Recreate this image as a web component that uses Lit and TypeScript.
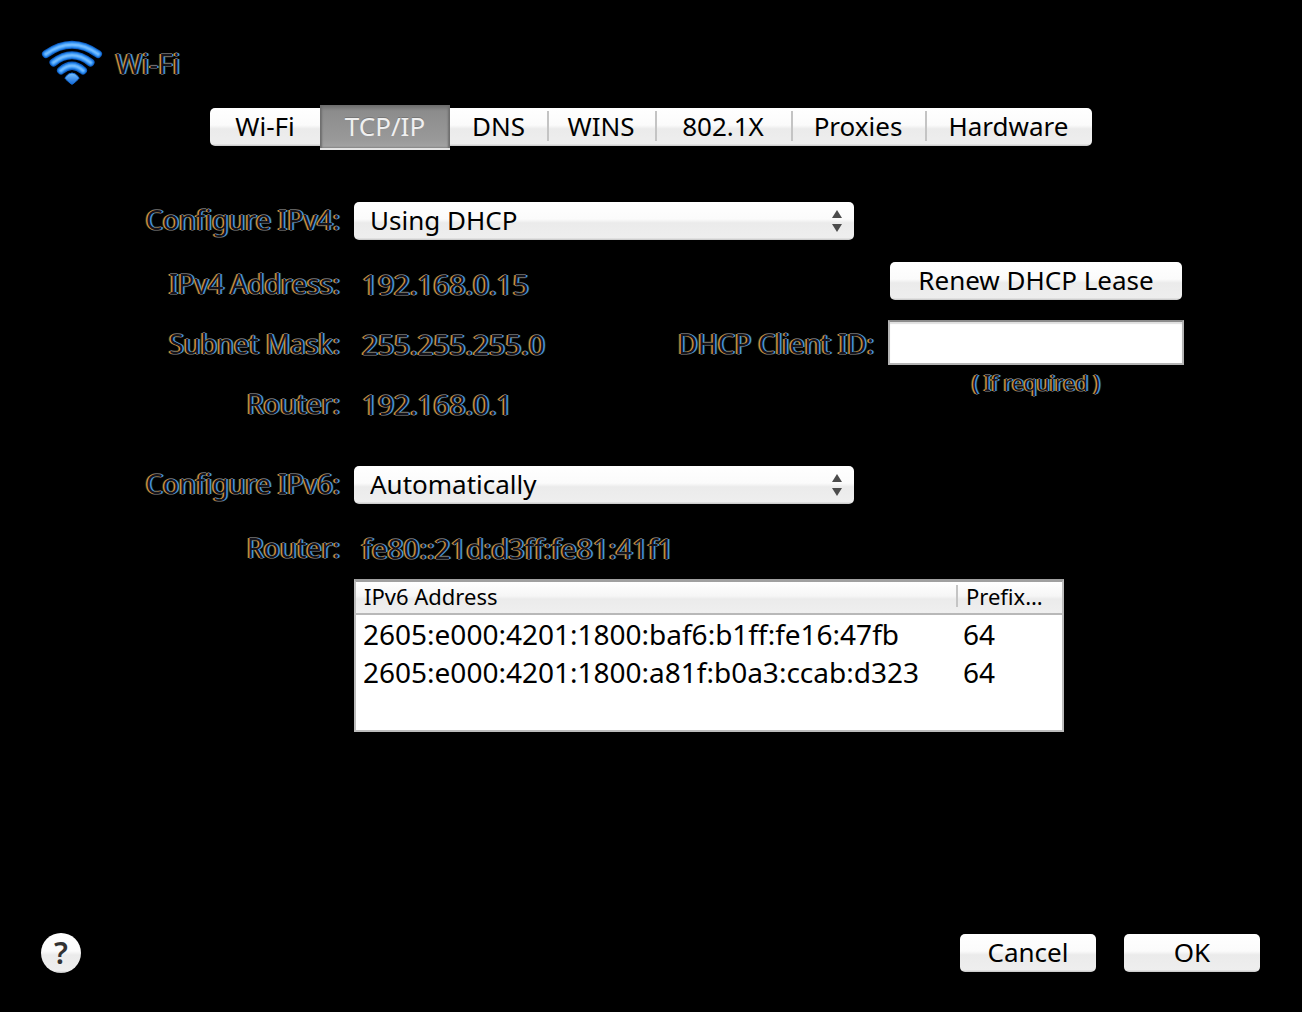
import { LitElement, html, css, svg } from "lit";
import { customElement, state } from "lit/decorators.js";
import { classMap } from "lit/directives/class-map.js";

const TABS = ["Wi-Fi", "TCP/IP", "DNS", "WINS", "802.1X", "Proxies", "Hardware"];

const ADDRESSES = [
  { address: "2605:e000:4201:1800:baf6:b1ff:fe16:47fb", prefix: "64" },
  { address: "2605:e000:4201:1800:a81f:b0a3:ccab:d323", prefix: "64" },
];

const arcs = (color: string, width: number) => svg`
  <g fill="none" stroke=${color} stroke-width=${width} stroke-linecap="round">
    <path d="M5 14Q31 -4.5 57 14" />
    <path d="M12.500 22.500Q31 8 49.500 22.500" />
    <path d="M20 30.500Q31 21 42 30.500" />
  </g>`;

@customElement("app-root")
export class AppRoot extends LitElement {
  static styles = css`
    :host {
      display: flex;
      flex-direction: column;
      box-sizing: border-box;
      min-height: 100vh;
      padding: 40px 0 39px;
      background: #000;
      color: #000;
      font-family: "Noto Sans", "Open Sans", sans-serif;
      font-size: 26px;
      line-height: 32px;
    }
    * {
      box-sizing: border-box;
    }
    button,
    select,
    input {
      margin: 0;
      font: inherit;
      color: #000;
    }
    .fringe {
      padding-bottom: 2px;
      color: #14141c;
      font-size: 27px;
      text-shadow: -1px 0 #d89a3c, -1px 0 #d89a3c, 1px 0 #4aa0e4, 1px 0 #4aa0e4,
        -2px 0 #6a481a, 2px 0 #20507c, 0 -1px #606060, 0 1px #505050;
    }
    .head {
      display: flex;
      align-items: center;
      gap: 13px;
      padding: 0 41px;
      height: 46px;
    }
    .wifi {
      width: 62px;
      height: 46px;
    }
    h1.fringe {
      margin: 0;
      padding: 0;
      font-size: 28px;
      font-weight: 400;
    }
    .tabs {
      display: grid;
      grid-template-columns: 110fr 130fr 97fr 108fr 136fr 134fr 167fr;
      align-items: center;
      margin: 19px 210px 37px;
      height: 45px;
    }
    .tab {
      display: flex;
      align-items: center;
      justify-content: center;
      height: 38px;
      padding: 0 0 2px;
      border: 0;
      white-space: nowrap;
    }
    .tab.face {
      margin-bottom: 2px;
    }
    .face {
      background: linear-gradient(#fff 0%, #fbfbfb 45%, #ebebeb 55%, #eee 94%, #c4c4c4 100%);
    }
    .tab:first-child {
      border-radius: 5px 0 0 5px;
    }
    .tab:last-child {
      border-radius: 0 5px 5px 0;
    }
    .divided::before {
      content: "";
      align-self: center;
      width: 2px;
      height: 30px;
      margin-right: auto;
      background: #c4c4c4;
    }
    .divided::after {
      content: "";
      width: 2px;
      margin-left: auto;
    }
    .tab.selected {
      height: 45px;
      color: #f0f0f0;
      border-bottom: 2px solid #e4e4e4;
      background: linear-gradient(#6c6c6c, #8c8c8c 14%, #999 80%, #a4a4a4);
      box-shadow: inset 2px 0 2px #6e6e6e, inset -2px 0 2px #6e6e6e;
      text-shadow: 0 -1px #777;
    }
    .form {
      display: grid;
      grid-template-columns: 300fr 520fr 296fr;
      grid-template-rows: 68px 60px 60px 60px 16px 68px 60px auto;
      column-gap: 14px;
      align-items: center;
      padding: 0 118px 0 40px;
    }
    .label {
      grid-column: 1;
      text-align: right;
    }
    .value {
      grid-column: 2;
      padding-left: 8px;
      font-size: 28px;
    }
    .popup {
      grid-column: 2;
      display: grid;
      align-items: center;
      margin-right: 20px;
    }
    .popup select,
    .popup svg {
      grid-area: 1 / 1;
    }
    .popup select {
      appearance: none;
      height: 38px;
      padding: 0 40px 2px 16px;
      border: 0;
      border-radius: 5px;
    }
    .popup svg {
      justify-self: end;
      width: 10px;
      height: 22px;
      margin-right: 12px;
      pointer-events: none;
    }
    .push {
      height: 38px;
      padding: 0 0 2px;
      border: 0;
      border-radius: 5px;
    }
    .renew {
      grid-column: 3;
      margin: 0 2px 8px;
    }
    .client-label {
      grid-area: 3 / 2;
      justify-self: end;
    }
    .client {
      grid-area: 3 / 3;
      width: 100%;
      height: 45px;
      margin-bottom: 6px;
      padding: 0 8px;
      border: 2px solid #b4b4b4;
      border-top-color: #8c8c8c;
      border-radius: 0;
      background: #fff;
      box-shadow: inset 0 2px 1px #e0e0e0;
    }
    .hint {
      grid-area: 4 / 3;
      align-self: start;
      justify-self: center;
      font-size: 21px;
      line-height: 16px;
    }
    .row2 {
      grid-row: 2;
    }
    .row3 {
      grid-row: 3;
    }
    .row4 {
      grid-row: 4;
    }
    .row6 {
      grid-row: 6;
    }
    .row7 {
      grid-row: 7;
    }
    .list {
      grid-column: 2 / 4;
      grid-row: 8;
      min-height: 153px;
      margin-right: 120px;
      border: 2px solid #bcbcbc;
      border-top: 3px solid #a0a0a0;
      background: #fff;
    }
    table {
      width: 100%;
      border-collapse: collapse;
      table-layout: fixed;
    }
    th,
    td {
      padding: 0 7px;
      text-align: left;
      font-weight: 400;
      white-space: nowrap;
    }
    thead th {
      height: 32px;
      padding: 0 8px 4px;
      border-bottom: 2px solid #b8b8b8;
      background: linear-gradient(#fff, #f6f6f6 45%, #ebebeb 55%, #efefef);
      font-size: 22px;
      line-height: 26px;
    }
    .prefix {
      width: 106px;
    }
    thead .prefix {
      padding: 0 0 4px;
    }
    .cell {
      display: block;
      padding-left: 8px;
      border-left: 2px solid #c4c4c4;
      line-height: 22px;
    }
    td {
      height: 38px;
      font-size: 28px;
      line-height: 38px;
    }
    .foot {
      display: flex;
      align-items: center;
      gap: 28px;
      margin-top: auto;
      padding: 0 42px 0 41px;
    }
    .help {
      display: grid;
      place-items: center;
      width: 40px;
      height: 40px;
      margin-right: auto;
      padding: 0;
      border: 0;
      border-radius: 50%;
      color: #333;
      font-size: 30px;
      font-weight: 600;
    }
    .action {
      width: 136px;
    }
  `;

  @state() private selected = "TCP/IP";

  private popup(id: string, row: string, options: string[]) {
    return html`
      <div class="popup ${row}">
        <select class="face" id=${id}>
          ${options.map((o) => html`<option>${o}</option>`)}
        </select>
        <svg viewBox="0 0 10 22" aria-hidden="true">
          <path d="M5 0L10 8H0ZM0 14H10L5 22Z" fill="#4c4c4c" />
        </svg>
      </div>
    `;
  }

  private tab(name: string, index: number) {
    const active = name === this.selected;
    const afterActive = TABS[index - 1] === this.selected;
    const classes = {
      tab: true,
      face: !active,
      selected: active,
      divided: index > 0 && !active && !afterActive,
    };
    return html`<button
      class=${classMap(classes)}
      role="tab"
      aria-selected=${active}
      @click=${() => (this.selected = name)}
    >${name}</button>`;
  }

  render() {
    return html`
      <header class="head">
        <svg class="wifi" viewBox="0 0 62 46" aria-hidden="true">
          <defs>
            <linearGradient id="drop" x1="0" y1="0" x2="0" y2="1">
              <stop offset="0" stop-color="#7cc4ff" />
              <stop offset="1" stop-color="#1268d8" />
            </linearGradient>
          </defs>
          ${arcs("#0f5fc4", 8)} ${arcs("#2a88ec", 6)} ${arcs("#4ea6fa", 4)} ${arcs("#74bcff", 2)}
          <path d="M24.500 37Q31 29 37.500 37Q38.500 38.500 37 39.500L32.500 43.500Q31 45 29.500 43.500L25 39.500Q23.500 38.500 24.500 37Z" fill="url(#drop)" stroke="#1670dc" stroke-linejoin="round" />
        </svg>
        <h1 class="fringe">Wi-Fi</h1>
      </header>

      <div class="tabs" role="tablist">${TABS.map((t, i) => this.tab(t, i))}</div>

      <main class="form">
        <label class="label fringe" for="ipv4">Configure IPv4:</label>
        ${this.popup("ipv4", "row1", ["Using DHCP", "Manually", "Off"])}

        <span class="label fringe row2">IPv4 Address:</span>
        <span class="value fringe row2">192.168.0.15</span>
        <button class="push face renew row2">Renew DHCP Lease</button>

        <span class="label fringe row3">Subnet Mask:</span>
        <span class="value fringe row3">255.255.255.0</span>
        <label class="client-label fringe" for="client">DHCP Client ID:</label>
        <input class="client" id="client" type="text" />

        <span class="label fringe row4">Router:</span>
        <span class="value fringe row4">192.168.0.1</span>
        <span class="hint fringe">( If required )</span>

        <label class="label fringe row6" for="ipv6">Configure IPv6:</label>
        ${this.popup("ipv6", "row6", ["Automatically", "Manually", "Off"])}

        <span class="label fringe row7">Router:</span>
        <span class="value fringe row7">fe80::21d:d3ff:fe81:41f1</span>

        <div class="list">
          <table>
            <thead>
              <tr>
                <th>IPv6 Address</th>
                <th class="prefix"><span class="cell">Prefix…</span></th>
              </tr>
            </thead>
            <tbody>
              ${ADDRESSES.map(
                (a) => html`<tr><td>${a.address}</td><td>${a.prefix}</td></tr>`
              )}
            </tbody>
          </table>
        </div>
      </main>

      <footer class="foot">
        <button class="help face" aria-label="Help">?</button>
        <button class="push face action">Cancel</button>
        <button class="push face action">OK</button>
      </footer>
    `;
  }
}
